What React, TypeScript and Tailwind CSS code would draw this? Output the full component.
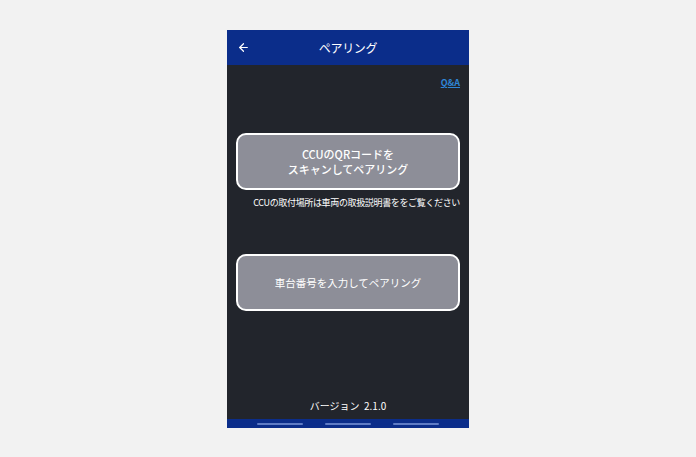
import { ArrowLeft } from 'lucide-react';

const font = { fontFamily: '"Noto Sans CJK JP", "Noto Sans", sans-serif' };

export default function App() {
  return (
    <div className="w-[696px] h-[457px] bg-[#f2f2f2] pt-[30px]" style={font}>
      <div className="ml-[227px] w-[242px] h-[398px] flex flex-col bg-[#22252c]">
        {/* Header */}
        <div className="h-[35px] bg-[#0b2d8a] flex items-center relative">
          <ArrowLeft size={13} strokeWidth={2.2} className="text-white ml-[10px]" />
          <span className="absolute left-0 right-0 text-center text-white text-[12px] tracking-tight">ペアリング</span>
        </div>

        {/* Content */}
        <div className="flex-1 flex flex-col px-[9px]">
          <div className="flex justify-end pt-[13px]">
            <span className="text-[9px] font-bold text-[#2f86d6] underline leading-none">Q&amp;A</span>
          </div>

          <button className="mt-[46px] h-[57px] w-[224px] rounded-[10px] border-2 border-white bg-[#8d8e98] text-white text-[11px] leading-[14px] font-medium flex flex-col items-center justify-center gap-[1px]">
            <span>CCUのQRコードを</span>
            <span>スキャンしてペアリング</span>
          </button>
          <p className="text-right text-white text-[9px] mt-[8px] leading-none tracking-[-0.35px]">
            CCUの取付場所は車両の取扱説明書ををご覧ください
          </p>

          <button className="mt-[47px] h-[57px] w-[224px] rounded-[10px] border-2 border-white bg-[#8d8e98] text-white text-[10.5px] flex items-center justify-center">
            車台番号を入力してペアリング
          </button>

          <div className="flex-1" />
          <p className="text-center text-white text-[10px] mb-[8px] leading-none">バージョン&nbsp;&nbsp;2.1.0</p>
        </div>

        {/* Bottom bar */}
        <div className="h-[9px] bg-[#0b2d8a] flex items-center justify-between px-[30px]">
          <div className="h-[2px] w-[46px] bg-[#5f7cc6] rounded-full" />
          <div className="h-[2px] w-[46px] bg-[#5f7cc6] rounded-full" />
          <div className="h-[2px] w-[46px] bg-[#5f7cc6] rounded-full" />
        </div>
      </div>
    </div>
  );
}
